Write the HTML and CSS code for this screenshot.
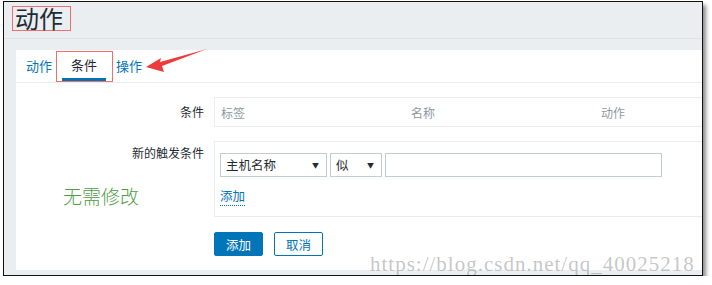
FILE: index.html
```html
<!DOCTYPE html>
<html lang="zh-CN">
<head>
  <meta charset="UTF-8" />
  <title>动作 - 条件</title>
  <link rel="stylesheet" href="styles.css">
</head>
<body>
  <div class="frame">
    <header class="page-header">
      <h1 class="page-title">动作</h1>
    </header>

    <section class="panel">
      <nav class="tabs">
        <a href="#" class="tab">动作</a>
        <a href="#" class="tab active">条件<span class="tab-mark"></span></a>
        <a href="#" class="tab">操作</a>
      </nav>

      <form class="form">
        <div class="form-row center">
          <label class="form-label">条件</label>
          <div class="box">
            <table class="cond-table">
              <tr>
                <th>标签</th>
                <th>名称</th>
                <th>动作</th>
              </tr>
            </table>
          </div>
        </div>

        <div class="form-row">
          <label class="form-label">新的触发条件</label>
          <div class="box box-pad">
            <div class="controls">
              <div class="select wide">主机名称<span class="caret">▼</span></div>
              <div class="select narrow">似<span class="caret">▼</span></div>
              <input type="text" class="text-input" />
            </div>
            <a href="#" class="link">添加</a>
          </div>
        </div>

        <div class="form-row">
          <span></span>
          <div class="buttons">
            <button type="button" class="btn primary">添加</button>
            <button type="button" class="btn">取消</button>
          </div>
        </div>
      </form>
    </section>

    <!-- annotations drawn on top of the screenshot -->
    <div class="note">无需修改</div>
    <svg class="arrow" width="72" height="34" viewBox="0 0 72 34">
      <polygon points="6,23 21,14 20,18 67,5 22,22 24,28" fill="#ee3b3b" />
    </svg>
    <div class="watermark">https://blog.csdn.net/qq_40025218</div>
  </div>
</body>
</html>
```

FILE: styles.css
```css
*, *::before, *::after {
  box-sizing: border-box;
}
html {
  font-family: "Noto Sans CJK SC", "Noto Sans", sans-serif;
  font-size: 12.5px;
  color: #1f2c33;
}
body {
  margin: 0;
  background: #fff;
}

.frame {
  position: relative;
  margin: 1px 0 0 3px;
  width: 700px;
  height: 275px;
  border: 1px solid #111;
  background: #ebeef0;
  box-shadow: 3px 4px 4px rgba(0, 0, 0, 0.45);
  overflow: hidden;
}

/* HEADER */
.page-header {
  height: 37px;
  padding: 4px 0 0 8px;
  border-bottom: 1px solid #dfe3e6;
}
.page-title {
  display: inline-block;
  margin: 0;
  height: 25px;
  padding: 0 7px 0 2px;
  border: 1px solid #ef6f6f;
  font-size: 24px;
  font-weight: 400;
  line-height: 22px;
  color: #1f2c33;
}

/* PANEL */
.panel {
  margin: 11px 0 0 12px;
  height: 220px;
  background: #fff;
}

.tabs {
  display: flex;
  gap: 1px;
  height: 33px;
  padding-left: 1px;
  border-bottom: 1px solid #ebeef0;
}
.tab {
  position: relative;
  width: 44px;
  height: 32px;
  line-height: 32px;
  text-align: center;
  font-size: 13px;
  color: #0275b8;
  text-decoration: none;
}
.tab.active {
  color: #1f2c33;
  border-bottom: 4px solid #0275b8;
  line-height: 30px;
}
.tab-mark {
  position: absolute;
  left: -6px;
  right: -7px;
  top: 1px;
  bottom: -4px;
  border: 1px solid #ef6f6f;
}

/* FORM */
.form {
  display: flex;
  flex-direction: column;
  gap: 14px;
  padding-top: 14px;
}
.form-row {
  display: grid;
  grid-template-columns: 188px 1fr;
  column-gap: 10px;
  align-items: start;
}
.form-row.center {
  align-items: center;
}
.form-label {
  text-align: right;
  font-size: 12px;
  line-height: 24px;
  color: #1f2c33;
}

.box {
  min-width: 0;
  border: 1px solid #ebeef0;
  border-right: none;
}
.box-pad {
  padding: 11px 5px 10px;
}

.cond-table {
  width: 572px;
  table-layout: fixed;
  border-collapse: collapse;
}
.cond-table th {
  width: 190px;
  height: 28px;
  padding: 0 6px;
  text-align: left;
  font-size: 12px;
  font-weight: 400;
  color: #8e999f;
}
.cond-table th:last-child {
  width: 192px;
}

.controls {
  display: flex;
  gap: 3px;
}
.select {
  position: relative;
  height: 24px;
  padding-left: 5px;
  border: 1px solid #c2ccd2;
  line-height: 22px;
  font-size: 12.5px;
  color: #1f2c33;
}
.select.wide {
  width: 107px;
}
.select.narrow {
  width: 52px;
}
.caret {
  position: absolute;
  right: 7px;
  top: 0;
  font-size: 7px;
  color: #1f2c33;
}
.text-input {
  width: 277px;
  height: 24px;
  margin: 0;
  border: 1px solid #c2ccd2;
}

.link {
  display: inline-block;
  margin-top: 10px;
  line-height: 18px;
  color: #0275b8;
  text-decoration: none;
  border-bottom: 1px dotted #0275b8;
}

.buttons {
  display: flex;
  gap: 11px;
  margin-top: 1px;
}
.btn {
  width: 49px;
  height: 24px;
  padding: 0;
  border: 1px solid #0275b8;
  border-radius: 2px;
  background: #fff;
  color: #0275b8;
  font-family: inherit;
  font-size: 12.5px;
}
.btn.primary {
  background: #0275b8;
  color: #fff;
}

/* ANNOTATIONS */
.note {
  position: absolute;
  left: 59px;
  top: 184px;
  font-size: 19px;
  font-weight: 300;
  line-height: 20px;
  color: #4f9d45;
}
.arrow {
  position: absolute;
  left: 136px;
  top: 42px;
}
.watermark {
  position: absolute;
  left: 366px;
  top: 251px;
  font-family: "Liberation Serif", serif;
  font-size: 21px;
  line-height: 22px;
  letter-spacing: 1px;
  color: rgba(150, 150, 150, 0.55);
  white-space: nowrap;
}
```
